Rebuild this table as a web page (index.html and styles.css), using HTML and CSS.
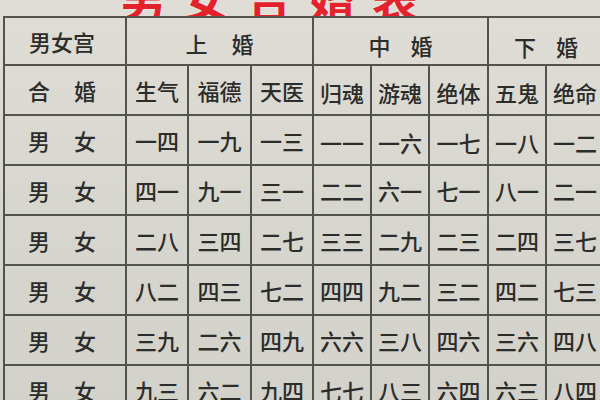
FILE: index.html
```html
<!DOCTYPE html>
<html lang="zh">
<head>
<meta charset="utf-8">
<title>男女宫合婚表</title>
<link rel="stylesheet" href="styles.css">
</head>
<body>
<div class="page">
  <div class="title"><span class="title-text">男女合婚表</span></div>
  <div class="table">
    <div class="cell lead">男女宫</div>
    <div class="cell group g1"><span>上</span><span>婚</span></div>
    <div class="cell group g2"><span>中</span><span>婚</span></div>
    <div class="cell group g3"><span>下</span><span>婚</span></div>

    <div class="cell lead pair"><span>合</span><span>婚</span></div>
    <div class="cell">生气</div>
    <div class="cell">福德</div>
    <div class="cell">天医</div>
    <div class="cell r">归魂</div>
    <div class="cell r">游魂</div>
    <div class="cell r">绝体</div>
    <div class="cell r">五鬼</div>
    <div class="cell r">绝命</div>

    <div class="cell lead pair"><span>男</span><span>女</span></div>
    <div class="cell">一四</div><div class="cell">一九</div><div class="cell">一三</div>
    <div class="cell r">一一</div><div class="cell r">一六</div><div class="cell r">一七</div>
    <div class="cell r">一八</div><div class="cell r">一二</div>

    <div class="cell lead pair"><span>男</span><span>女</span></div>
    <div class="cell">四一</div><div class="cell">九一</div><div class="cell">三一</div>
    <div class="cell">二二</div><div class="cell">六一</div><div class="cell">七一</div>
    <div class="cell">八一</div><div class="cell">二一</div>

    <div class="cell lead pair"><span>男</span><span>女</span></div>
    <div class="cell">二八</div><div class="cell">三四</div><div class="cell">二七</div>
    <div class="cell">三三</div><div class="cell">二九</div><div class="cell">二三</div>
    <div class="cell">二四</div><div class="cell">三七</div>

    <div class="cell lead pair"><span>男</span><span>女</span></div>
    <div class="cell">八二</div><div class="cell">四三</div><div class="cell">七二</div>
    <div class="cell">四四</div><div class="cell">九二</div><div class="cell">三二</div>
    <div class="cell">四二</div><div class="cell">七三</div>

    <div class="cell lead pair"><span>男</span><span>女</span></div>
    <div class="cell">三九</div><div class="cell">二六</div><div class="cell">四九</div>
    <div class="cell">六六</div><div class="cell">三八</div><div class="cell">四六</div>
    <div class="cell">三六</div><div class="cell">四八</div>

    <div class="cell lead pair"><span>男</span><span>女</span></div>
    <div class="cell">九三</div><div class="cell">六二</div><div class="cell">九四</div>
    <div class="cell">七七</div><div class="cell">八三</div><div class="cell">六四</div>
    <div class="cell">六三</div><div class="cell">八四</div>
  </div>
</div>
</body>
</html>
```

FILE: styles.css
```css
html, body {
  margin: 0;
  padding: 0;
}
body {
  width: 600px;
  height: 400px;
  overflow: hidden;
  background: linear-gradient(180deg, #dfddd6 0%, #d8d7cf 50%, #d3d2ca 100%);
  font-family: "Noto Sans CJK SC", "Noto Sans CJK TC", sans-serif;
  color: #2c2c2a;
}
.page {
  display: flex;
  flex-direction: column;
}
.title {
  height: 16px;
  overflow: hidden;
  display: flex;
  align-items: flex-end;
  padding-left: 120px;
}
.title-text {
  display: block;
  font-size: 46px;
  line-height: 38px;
  font-weight: 700;
  letter-spacing: 17px;
  color: #e3222c;
  text-shadow: 0 0 2px #fff4f4;
  flex: none;
}
.table {
  margin-left: 3px;
  width: 640px;
  display: grid;
  grid-template-columns: 122px 62px 63px 62px 58px 58px 59px 58px 58px;
  grid-template-rows: 48px repeat(7, 50px);
  border-top: 2px solid #52524f;
  border-left: 2px solid #52524f;
}
.cell {
  display: flex;
  align-items: center;
  justify-content: center;
  border-right: 2px solid #52524f;
  border-bottom: 2px solid #52524f;
  font-size: 22px;
  font-weight: 500;
  line-height: 1;
}
.r {
  padding-top: 3px;
}
.lead {
  padding-right: 6px;
}
.pair {
  gap: 24px;
}
.group {
  gap: 24px;
}
.g1 {
  grid-column: span 3;
  padding-top: 4px;
}
.g2 {
  grid-column: span 3;
  padding-top: 8px;
  gap: 20px;
}
.g3 {
  grid-column: span 2;
  padding-top: 10px;
  gap: 20px;
}
```
